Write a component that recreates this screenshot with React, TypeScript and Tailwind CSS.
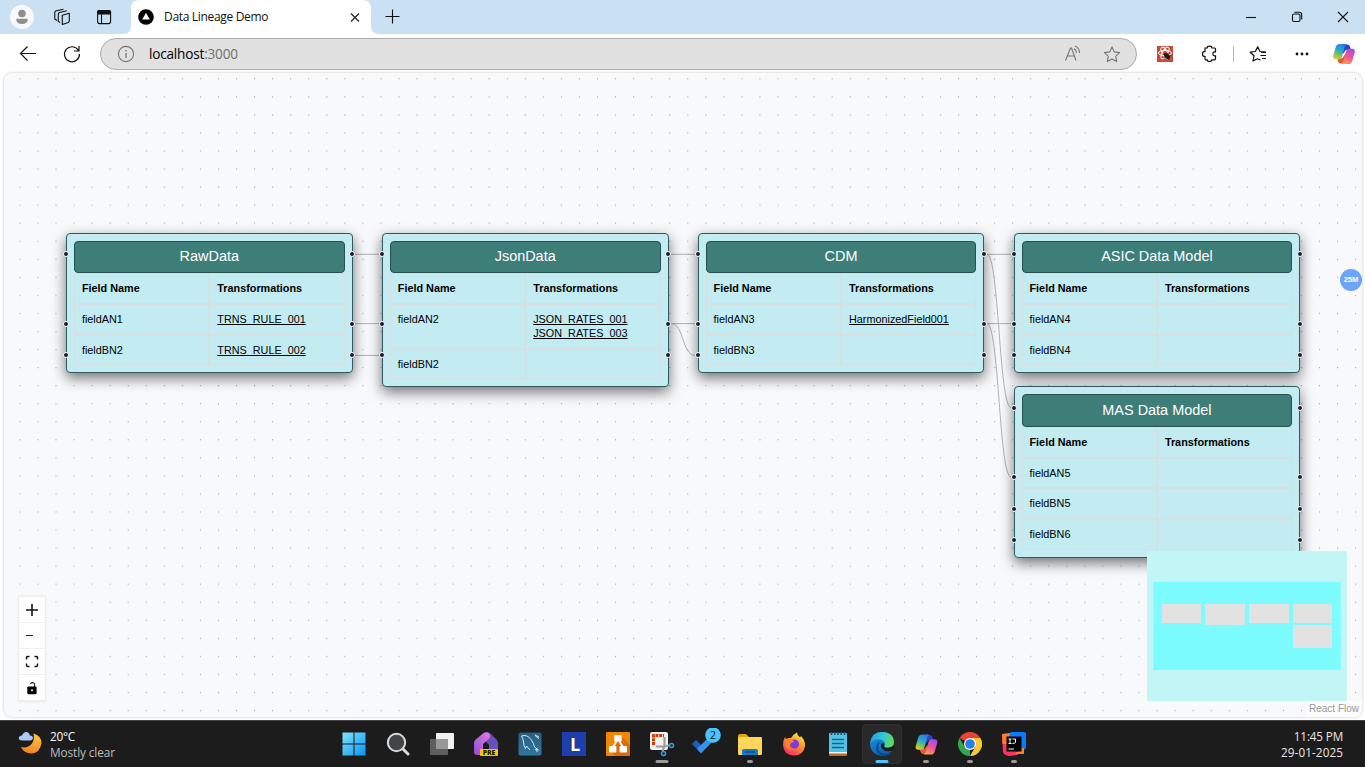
import React from "react";

const UI = "font-['Open_Sans','Noto_Sans',sans-serif]";

type Row = { field: string; rules: string[] };
type NodeData = { title: string; x: number; y: number; rows: Row[] };

const NODES: NodeData[] = [
  { title: "RawData", x: 65.9, y: 232.7, rows: [{ field: "fieldAN1", rules: ["TRNS_RULE_001"] }, { field: "fieldBN2", rules: ["TRNS_RULE_002"] }] },
  { title: "JsonData", x: 381.8, y: 232.7, rows: [{ field: "fieldAN2", rules: ["JSON_RATES_001", "JSON_RATES_003"] }, { field: "fieldBN2", rules: [] }] },
  { title: "CDM", x: 697.6, y: 232.7, rows: [{ field: "fieldAN3", rules: ["HarmonizedField001"] }, { field: "fieldBN3", rules: [] }] },
  { title: "ASIC Data Model", x: 1013.5, y: 232.7, rows: [{ field: "fieldAN4", rules: [] }, { field: "fieldBN4", rules: [] }] },
  { title: "MAS Data Model", x: 1013.5, y: 386.3, rows: [{ field: "fieldAN5", rules: [] }, { field: "fieldBN5", rules: [] }, { field: "fieldBN6", rules: [] }] },
];

const EDGES = [
  "M355 254.3H379",
  "M355 323.6H379",
  "M355 355.4H379",
  "M671 254.3H695",
  "M671 323.6H695",
  "M671 323.6C684 323.6 682 355.4 695 355.4",
  "M987 254.3H1011",
  "M987 323.6H1011",
  "M987 254.3C999 254.3 999 407.6 1011 407.6",
  "M987 323.6C999 323.6 999 477 1011 477",
];

const CANVAS_X = 4;
const CANVAS_Y = 73;

function Handle({ side, y }: { side: "left" | "right"; y: number }) {
  return (
    <span
      className={
        "absolute size-[6px] rounded-full border border-white bg-[#1a192b] " +
        (side === "left" ? "-left-[4px]" : "-right-[3.5px]")
      }
      style={{ top: y }}
    />
  );
}

function Cell({ children, bold }: { children?: React.ReactNode; bold?: boolean }) {
  return (
    <div
      className={
        "border border-[#d8dfe1] px-[7px] pt-[7px] pb-[7.65px] text-[10.83px] leading-[14.1px] text-black " +
        (bold ? "font-bold" : "")
      }
    >
      {children}
    </div>
  );
}

function TableNode({ node }: { node: NodeData }) {
  const handles = [17.6, ...node.rows.map((_, i) => 87 + i * 31.6)];
  return (
    <div
      className="absolute w-[286.8px] rounded-[4px] border border-[#2f5a60] bg-[#c2ecf2] p-[7px] shadow-[0_5px_14px_rgba(0,0,0,0.55)]"
      style={{ left: node.x - CANVAS_X, top: node.y - CANVAS_Y }}
    >
      <div className="flex h-[32.5px] items-center justify-center rounded-[4px] border border-[#27504f] bg-[#3e7e78] text-[14.44px] text-white">
        {node.title}
      </div>
      <div className="grid grid-cols-2">
        <Cell bold>Field Name</Cell>
        <Cell bold>Transformations</Cell>
        {node.rows.map((row) => (
          <React.Fragment key={row.field}>
            <Cell>{row.field}</Cell>
            <Cell>
              {row.rules.map((rule) => (
                <div key={rule} className="underline">{rule}</div>
              ))}
            </Cell>
          </React.Fragment>
        ))}
      </div>
      {handles.map((y) => (
        <React.Fragment key={y}>
          <Handle side="left" y={y} />
          <Handle side="right" y={y} />
        </React.Fragment>
      ))}
    </div>
  );
}

function Canvas() {
  return (
    <main className="relative h-[644px] w-[1358px] overflow-hidden rounded-[8px] bg-[#f8f9fb] font-['Liberation_Sans',Arial,sans-serif] shadow-[0_0_2px_1px_rgba(0,0,0,0.12)]">
      <svg className="absolute inset-0" width="1359" height="644">
        <defs>
          <pattern id="dots" x="15.4" y="5.2" width="18.05" height="18.05" patternUnits="userSpaceOnUse">
            <circle cx="0.6" cy="0.6" r="0.55" fill="#91919a" />
          </pattern>
        </defs>
        <rect width="1359" height="644" fill="url(#dots)" />
        <g transform="translate(-4 -73)" fill="none" stroke="#b1b1b7" strokeWidth="1">
          {EDGES.map((d) => (
            <path key={d} d={d} />
          ))}
        </g>
      </svg>
      {NODES.map((n) => (
        <TableNode key={n.title} node={n} />
      ))}

      <div className="absolute top-[524px] left-[15px] flex flex-col shadow-[0_0_2px_1px_rgba(0,0,0,0.08)]">
        {["plus", "minus", "fit", "lock"].map((k) => (
          <button key={k} className="flex h-[26px] w-[26px] items-center justify-center border-b border-[#eee] bg-white">
            <svg width="14" height="14" viewBox="0 0 14 14">
              {k === "plus" && <path d="M1 7H13M7 1V13" stroke="#111" strokeWidth="1.6" />}
              {k === "minus" && <path d="M1 6.5H8" stroke="#222" strokeWidth="1.1" />}
              {k === "fit" && (
                <path d="M1.5 4.5V2.8Q1.5 1.5 2.8 1.5H4.5M9.5 1.5H11.2Q12.5 1.5 12.5 2.8V4.5M12.5 8.5V10.2Q12.5 11.5 11.2 11.5H9.5M4.5 11.5H2.8Q1.5 11.5 1.5 10.2V8.5" fill="none" stroke="#111" strokeWidth="1.5" />
              )}
              {k === "lock" && (
                <>
                  <path d="M5.2 2.6Q8.8 0.4 9.6 3.3V6" fill="none" stroke="#111" strokeWidth="1.1" />
                  <rect x="2.3" y="5.4" width="9.3" height="7.8" rx="1.2" fill="#000" />
                  <circle cx="7" cy="9.2" r="1" fill="#fff" />
                </>
              )}
            </svg>
          </button>
        ))}
      </div>

      <svg className="absolute top-[478px] left-[1143px]" width="200" height="150">
        <rect width="200" height="150" fill="#c2f5f5" />
        <rect x="6.3" y="31" width="187.4" height="88" fill="#7dfcff" />
        <g fill="#e2e2e2" shapeRendering="crispEdges">
          <rect x="15" y="53" width="39" height="19" />
          <rect x="58" y="53" width="40" height="21" />
          <rect x="102" y="53" width="40" height="19" />
          <rect x="146" y="53" width="39" height="19" />
          <rect x="146" y="74" width="39" height="23" />
        </g>
      </svg>
      <div className="absolute right-0 bottom-0 bg-white/50 pr-[3px] pl-[3px] text-[10px] leading-[16px] text-[#999]">React Flow</div>
      <div className="absolute top-[196px] left-[1336px] flex size-[22px] items-center justify-center rounded-full bg-[#6ea4f7] text-[7.5px] font-bold text-white">25M</div>
    </main>
  );
}

function CopilotLogo({ size, id }: { size: number; id: string }) {
  return (
    <svg width={size} height={size} viewBox="0 0 24 24">
      <defs>
        <linearGradient id={id + "a"} x1="0.6" y1="0" x2="0.2" y2="1">
          <stop offset="0" stopColor="#2a7de8" />
          <stop offset="0.4" stopColor="#28a8c8" />
          <stop offset="0.7" stopColor="#7cc45a" />
          <stop offset="1" stopColor="#f0c62c" />
        </linearGradient>
        <linearGradient id={id + "b"} x1="0.7" y1="0" x2="0.3" y2="1">
          <stop offset="0" stopColor="#a44be8" />
          <stop offset="0.5" stopColor="#ec5596" />
          <stop offset="1" stopColor="#f9a04a" />
        </linearGradient>
      </defs>
      <path d="M11 2H15.500Q17.500 2 18.200 4.200L19.200 7.500H15.500Q13.500 7.500 13 9L11 12Z" fill="#2446c8" />
      <path d="M13 22H8.500Q6.500 22 5.800 19.800L4.800 16.500H8.500Q10.500 16.500 11 15L13 12Z" fill="#e8553a" />
      <path d="M7.500 1.500H15Q13.300 2.200 12.600 5L10 14.500Q9.200 17.500 6.800 17.500H3.500Q0 17.500 0.800 13.500L3.500 4.500Q4.500 1.500 7.500 1.500Z" fill={`url(#${id}a)`} />
      <path d="M16.500 22.500H9Q10.700 21.800 11.400 19L14 9.500Q14.800 6.500 17.200 6.500H20.500Q24 6.500 23.200 10.500L20.500 19.500Q19.500 22.500 16.500 22.500Z" fill={`url(#${id}b)`} />
    </svg>
  );
}

function TabStrip() {
  return (
    <div className="flex h-[34px] items-center bg-[#c9e1f3]">
      <svg width="131" height="34" viewBox="0 0 131 34">
        <circle cx="22" cy="17" r="12" fill="#f8f8f8" />
        <circle cx="22" cy="13.500" r="3.800" fill="#8e8e8e" />
        <path d="M16.300 18.800H27.700V20Q27 24 22 24T16.300 20Z" fill="#8e8e8e" />
        <g fill="none" stroke="#111" strokeWidth="1.100" strokeLinejoin="round">
          <path d="M62.300 15.300L69.300 13.200V21L68.300 22.500L62.300 24.500Z" />
          <path d="M60 22.500L58.300 21.500V14Q58.300 12.900 59.500 12.500L66.800 10.700M57 20.500L54.800 19V12.500Q54.800 11 56.300 10.700L63.500 9.300" />
          <rect x="97.600" y="10.600" width="13" height="13" rx="2" />
          <path d="M101.500 14V23.500" />
        </g>
        <path d="M97 12Q97 10 99 10H109Q111 10 111 12V14.500H97Z" fill="#111" />
        <path d="M131 26V34H123Q131 34 131 26Z" fill="#fff" />
      </svg>
      <div className="flex h-[34px] w-[240px] items-center rounded-t-[8px] bg-white pl-[7px]">
        <svg width="16" height="16" viewBox="0 0 16 16">
          <circle cx="8" cy="8" r="7.800" fill="#000" />
          <path d="M8 3.700L11.800 10.500H4.200Z" fill="#fff" />
        </svg>
        <span className="ml-[10px] w-[184px] text-[12px] tracking-[-0.32px] text-[#111]">Data Lineage Demo</span>
        <svg width="14" height="14" viewBox="0 0 14 14"><path d="M3 3.500L11 11.500M11 3.500L3 11.500" stroke="#222" strokeWidth="1.200" /></svg>
      </div>
      <svg width="40" height="34" viewBox="0 0 40 34">
        <path d="M0 26V34H8Q0 34 0 26Z" fill="#fff" />
        <path d="M14.500 16.500H28.500M21.500 9.500V23.500" stroke="#111" strokeWidth="1.100" />
      </svg>
      <svg className="ml-auto" width="125" height="34" viewBox="0 0 125 34" fill="none" stroke="#111" strokeWidth="1.100">
        <path d="M6 17.500H16" />
        <rect x="52.500" y="14" width="7.500" height="7.500" rx="1.500" />
        <path d="M54.500 12.300H59.500Q61.700 12.300 61.700 14.500V19.500" />
        <path d="M98 12L108 22M108 12L98 22" />
      </svg>
    </div>
  );
}

const STAR = "M0 -7.500L2.300 -2.600L7.600 -1.900L3.700 1.800L4.700 7.100L0 4.600L-4.700 7.100L-3.700 1.800L-7.600 -1.900L-2.300 -2.600Z";

function Toolbar() {
  return (
    <div className="flex h-[39px] items-center bg-white">
      <svg width="100" height="39" viewBox="0 0 100 39" fill="none" stroke="#111" strokeWidth="1.200">
        <path d="M36 19.500H21M27.500 12.500L20.500 19.500L27.500 26.500" />
        <path d="M78.500 16.500A7.500 7.500 0 1 0 79.500 20M79 12V17H74" />
      </svg>
      <div className="flex h-[32px] w-[1037px] items-center rounded-full border border-[#ababab] bg-[#e1e1e1] pl-[16px]">
        <svg width="18" height="18" viewBox="0 0 18 18" fill="none" stroke="#747474">
          <circle cx="9" cy="9" r="7.600" strokeWidth="1.100" />
          <path d="M9 8V13M9 5V6.500" strokeWidth="1.300" />
        </svg>
        <span className="ml-[14px] pt-[2px] text-[13.600px] tracking-[-0.2px] text-black">localhost<span className="text-[#707070]">:3000</span></span>
        <svg className="mr-[11px] ml-auto" width="62" height="30" viewBox="0 0 62 30" fill="none" stroke="#747474" strokeWidth="1.100">
          <path d="M2.500 21.500L7.500 9H8.500L13 21.500M4.300 17H11.500M11 9.500Q13.500 11 13.500 14M12 7Q16.500 9 16.500 14" />
          <path transform="translate(49 15.500)" strokeLinejoin="round" d={STAR} />
        </svg>
      </div>
      <svg width="228" height="39" viewBox="0 0 228 39" fill="none">
        <rect x="20" y="12" width="16" height="16" fill="#c74b36" />
        <g stroke="#fff" strokeWidth="1">
          <ellipse cx="28" cy="19" rx="6.500" ry="2.600" />
          <ellipse cx="28" cy="19" rx="6.500" ry="2.600" transform="rotate(60 28 19)" />
          <ellipse cx="28" cy="19" rx="6.500" ry="2.600" transform="rotate(-60 28 19)" />
        </g>
        <ellipse cx="30" cy="22" rx="2.500" ry="3.500" transform="rotate(-40 30 22)" fill="#2b1713" />
        <path d="M25.500 20L33 24M27 24.500L32 18.500M31 26L33.500 21" stroke="#2b1713" strokeWidth="0.800" />
        <path d="M68 14H70.200Q70.200 12.200 72.500 12.200T74.800 14H77.500Q78.500 14 78.500 15V17.800H77.500Q75.800 17.900 75.800 19.800T77.500 21.800H78.500V24.800Q78.500 25.800 77.500 25.800H74.800Q74.800 27.500 72.500 27.500T70.200 25.800H69Q68 25.800 68 24.800V22.500Q65.500 22.500 65.500 19.900T68 17.300Z" stroke="#111" strokeWidth="1.200" />
        <path d="M96.500 12V28" stroke="#b8b8b8" />
        <path d="M123.500 26L120.300 24.800L116 27L117 21.800L113.200 18.200L118.400 17.500L120.700 12.700L123 17.500L129 18M124 18.500H129M123.500 21.500H129M125 24.500H129" stroke="#111" strokeWidth="1.200" strokeLinejoin="round" />
        <g fill="#111"><circle cx="160" cy="20" r="1.400" /><circle cx="165" cy="20" r="1.400" /><circle cx="170" cy="20" r="1.400" /></g>
        <svg x="195.500" y="8.500" width="23" height="23"><CopilotLogo size={23} id="top" /></svg>
      </svg>
    </div>
  );
}

function EdgeLogo() {
  return (
    <svg width="26" height="26" viewBox="0 0 24 24">
      <defs>
        <linearGradient id="eg" x1="0" y1="0.3" x2="1" y2="0.5"><stop offset="0" stopColor="#22a0e0" /><stop offset="0.5" stopColor="#31c6d8" /><stop offset="1" stopColor="#66dc56" /></linearGradient>
        <linearGradient id="eb" x1="0" y1="0" x2="0.5" y2="1"><stop offset="0" stopColor="#1e9ae6" /><stop offset="1" stopColor="#0f5cae" /></linearGradient>
      </defs>
      <circle cx="12" cy="12" r="11" fill="url(#eb)" />
      <path d="M8.500 14Q8.500 21 16 21Q19 21 21 19.300Q18 23 12 23Q6 21 6.500 15Q7 11 10 10Q8.500 12 8.500 14Z" fill="#0c4a93" />
      <path d="M1.200 11Q2.500 1 12 1Q23 1.500 23 10.500Q22.500 15.500 17.500 15.500Q13.500 15.500 14 13.500Q15.500 12.500 14.500 10.500Q12.500 7.500 8.500 7.500Q3.500 7.500 1.200 11Z" fill="url(#eg)" />
      <path d="M14 13.500Q13.500 15.500 17.500 15.500Q20.500 15.500 23.400 13V17Q20.500 19 16.500 18.600Q11.500 17.500 11 13.500Q11 11.500 12.800 11Q15 12 14 13.500Z" fill="#1c1c1c" />
    </svg>
  );
}

function TaskIcon({ name }: { name: string }) {
  switch (name) {
    case "windows":
      return (
        <svg width="24" height="24" viewBox="0 0 24 24">
          <defs><linearGradient id="win" x1="0" y1="0" x2="1" y2="1"><stop offset="0" stopColor="#7ee4fc" /><stop offset="1" stopColor="#0b93f2" /></linearGradient></defs>
          <path d="M0.500 0.500H11.500V11.500H0.500ZM12.500 0.500H23.500V11.500H12.500ZM0.500 12.500H11.500V23.500H0.500ZM12.500 12.500H23.500V23.500H12.500Z" fill="url(#win)" />
        </svg>
      );
    case "search":
      return (
        <svg width="24" height="24" viewBox="0 0 24 24" stroke="#d9dadd">
          <path d="M16.500 16.500L22 22" strokeWidth="3" strokeLinecap="round" />
          <circle cx="10.500" cy="10.500" r="8.700" fill="#424446" strokeWidth="2" />
        </svg>
      );
    case "tasks":
      return (
        <svg width="24" height="24" viewBox="0 0 24 24">
          <rect x="6" y="1" width="18" height="16" rx="1" fill="#f1f1f1" />
          <rect x="0" y="7" width="18" height="16" rx="1" fill="#5e5e5e" />
          <path d="M6 7H18V17H6Z" fill="#989898" />
        </svg>
      );
    case "home":
      return (
        <svg width="24" height="24" viewBox="0 0 24 24">
          <defs><linearGradient id="dh" x1="0" y1="1" x2="1" y2="0"><stop offset="0" stopColor="#8b50d4" /><stop offset="1" stopColor="#e57ae4" /></linearGradient></defs>
          <path d="M12 0.500Q14.500 -0.500 17 2L22.500 7.500Q24 9 24 11V20Q24 23 21 23H15V13L10 8Z" fill="#6850b9" />
          <path d="M9 1.500Q12 -1 15 1.500Q17.500 4 15 6.500L9 12V23H3Q0 23 0 20V11Q0 9 1.500 7.800Z" fill="url(#dh)" />
          <path d="M9 13L12 10.500L15 13V17H9Z" fill="#1c1c1c" />
          <rect x="6" y="17" width="18" height="7" rx="1" fill="#ffc400" />
          <text x="15" y="23" textAnchor="middle" fontSize="6.800" fontWeight="800" fontFamily="Open Sans" fill="#221b00">PRE</text>
        </svg>
      );
    case "mysql":
      return (
        <svg width="24" height="24" viewBox="0 0 24 24">
          <defs><linearGradient id="my" x1="0" y1="0" x2="0" y2="1"><stop offset="0" stopColor="#275f80" /><stop offset="1" stopColor="#2e789e" /></linearGradient></defs>
          <rect x="0.500" y="0.500" width="23" height="23" rx="2" fill="url(#my)" />
          <path d="M3.500 4Q9 2 13 7.500Q16 11.500 16.500 15L20.500 18L17.500 17.500L19.500 20M3.500 4Q5 6 5.500 10Q5.500 14 7.500 16.500L8.500 14L12 18M17 2.500L18.500 5L21 6.500M18.500 3.500L21 5" fill="none" stroke="#d9ebf3" strokeWidth="1" />
        </svg>
      );
    case "l":
      return (
        <div className="flex size-[24px] items-center justify-center bg-[#1d3fae] pl-[2px] font-['Open_Sans',sans-serif] text-[18px] leading-none font-bold text-white [text-shadow:-1px_0_0_#083a4a]">L</div>
      );
    case "drawio":
      return (
        <svg width="24" height="24" viewBox="0 0 24 24">
          <rect width="24" height="24" rx="1" fill="#f08705" />
          <path d="M15 4L24 13V24H9L4 19Z" fill="#df6c0c" />
          <path d="M12 7L6.500 16M12 7L17.500 16" stroke="#fff" strokeWidth="1.800" />
          <rect x="8.300" y="3" width="7.400" height="6.500" rx="1" fill="#fff" />
          <rect x="3" y="14" width="7.400" height="6.500" rx="1" fill="#fff" />
          <rect x="13.600" y="14" width="7.400" height="6.500" rx="1" fill="#fff" />
        </svg>
      );
    case "snip":
      return (
        <svg width="26" height="26" viewBox="0 0 26 26">
          <rect x="1" y="1" width="18" height="18" rx="2" fill="#f2f2f2" />
          <path d="M4.500 14V4.500H15" fill="none" stroke="#d83b01" strokeWidth="3" strokeDasharray="3 0.800" />
          <path d="M15.500 6V15L13.500 20M7 15.500H16L21 14" fill="none" stroke="#9b9da0" strokeWidth="2.200" />
          <circle cx="22.500" cy="14.500" r="2" fill="#1c1c1c" stroke="#2fa3e7" strokeWidth="1.500" />
          <circle cx="14.500" cy="22.500" r="2" fill="#1c1c1c" stroke="#2fa3e7" strokeWidth="1.500" />
        </svg>
      );
    case "todo":
      return (
        <svg width="32" height="32" viewBox="0 0 32 32">
          <path d="M2 16L6 12L14.500 20L10.500 24.500Z" fill="#1c5fc1" />
          <path d="M7 21L20 8L24 12L11 25.500Z" fill="#3b8fe8" />
          <circle cx="23" cy="7" r="7.800" fill="#4cc2ff" />
          <text x="23" y="10.800" textAnchor="middle" fontSize="10.500" fontFamily="Open Sans" fill="#08202d">2</text>
        </svg>
      );
    case "folder":
      return (
        <svg width="26" height="26" viewBox="0 0 26 26">
          <path d="M1 5Q1 3 3 3H9L12 6H24Q25 6 25 7V12H1Z" fill="#e0a30a" />
          <rect x="1" y="6" width="24" height="18" rx="1.500" fill="#ffd659" />
          <path d="M5 24V20Q5 18 7 18H19Q21 18 21 20V24Z" fill="#1679c8" />
          <path d="M8 21H18" stroke="#0d4a82" strokeWidth="1.400" />
        </svg>
      );
    case "firefox":
      return (
        <svg width="24" height="24" viewBox="0 0 24 24">
          <defs><linearGradient id="ff" x1="0.8" y1="0" x2="0.2" y2="1"><stop offset="0" stopColor="#fff044" /><stop offset="0.4" stopColor="#ff9a2b" /><stop offset="1" stopColor="#f5246a" /></linearGradient></defs>
          <path d="M3 5L4 7Q6 5.500 9 6Q11.500 2 15 0.500Q15 3.500 18 5.500L19 4Q23.500 9 23 14Q21.500 23.500 12 23.500Q1.500 23 1 13Q1 8.500 3 5Z" fill="url(#ff)" />
          <circle cx="12.500" cy="12" r="4.600" fill="#7a3ddd" />
          <path d="M3.500 8Q8 6 12.500 9.500Q9 10 8 12.500Q7 16 11.500 18Q4.500 18.500 3 13Z" fill="#ff8226" />
        </svg>
      );
    case "notepad":
      return (
        <svg width="24" height="26" viewBox="0 0 24 26">
          <rect x="3" y="20" width="18" height="5" rx="1" fill="#b96b2c" />
          <path d="M3 20H21V22.500H3Z" fill="#f5f5f5" />
          <rect x="3" y="2" width="18" height="19" rx="1" fill="#51c1e6" />
          <path d="M6 8.500H18M6 12.500H18M6 16.500H18" stroke="#12668d" strokeWidth="1.600" />
          <path d="M5.500 1V4M8.800 1V4M12 1V4M15.200 1V4M18.500 1V4" stroke="#0f587a" strokeWidth="1.500" />
        </svg>
      );
    case "edge":
      return <EdgeLogo />;
    case "copilot":
      return <CopilotLogo size={23} id="task" />;
    case "chrome":
      return (
        <svg width="24" height="24" viewBox="0 0 24 24">
          <path d="M12 12L1.600 6A12 12 0 0 1 22.400 6Z" fill="#ea4335" />
          <path d="M12 12V24A12 12 0 0 1 1.600 6L6.800 15Z" fill="#30a650" />
          <path d="M12 6H22.400A12 12 0 0 1 12 24L17.200 15Z" fill="#fcc934" />
          <circle cx="12" cy="12" r="6" fill="#fff" />
          <circle cx="12" cy="12" r="4.800" fill="#2b7de9" />
        </svg>
      );
    default:
      return (
        <svg width="24" height="24" viewBox="0 0 24 24">
          <path d="M0 2L8 1L16 23L7 24Q2 23 1 20Z" fill="#fe3364" />
          <path d="M0 2L11 1L6 12H0.500Z" fill="#ff7b2e" />
          <path d="M9 0H22Q24 0 24 2V16L18 22L7 5Z" fill="#087cfa" />
          <path d="M19 16H22V22H13Z" fill="#fc801d" />
          <rect x="4.500" y="4.500" width="15" height="15" fill="#000" />
          <path d="M6.500 7H9.500M8 7V11.500M6.500 11.500H9.500M10.500 7H13.500V10Q13.500 11.500 10.500 11.500M6.500 17H12" stroke="#fff" strokeWidth="1" fill="none" />
        </svg>
      );
  }
}

const TASKS = ["windows", "search", "tasks", "home", "mysql", "l", "drawio", "snip", "todo", "folder", "firefox", "notepad", "edge", "copilot", "chrome", "idea"];

function Taskbar() {
  return (
    <footer className="flex h-[47px] items-center border-t border-[#444] bg-[#1c1c1c]">
      <div className="flex w-[332px] items-center pl-[17px]">
        <svg width="26" height="26" viewBox="0 0 26 26">
          <defs><linearGradient id="moon" x1="0.7" y1="0" x2="0.4" y2="1"><stop offset="0" stopColor="#ffc83d" /><stop offset="1" stopColor="#f18324" /></linearGradient></defs>
          <path d="M16.500 2.500Q24.500 5 24.500 12Q23 22 14.500 22.500Q6.500 22 4 16Q10.500 17.500 14.500 13Q18 8.500 16.500 2.500Z" fill="url(#moon)" />
          <path d="M5 9.500Q1.500 9.500 1.800 6.500Q2.500 4.500 5 4.500Q6.500 0.500 10 1Q12.500 1.500 13 4.500Q16 4.500 16 7Q15.500 9.500 13 9.500Z" fill="#a9c8f5" />
        </svg>
        <div className="ml-[7px] text-[11.800px] leading-[16px] text-white">
          <div className="tracking-[-0.3px]">20°C</div>
          <div className="tracking-[-0.1px] text-[#bdbdbd]">Mostly clear</div>
        </div>
      </div>
      <div className="flex">
        {TASKS.map((t, i) => (
          <div key={t} className="flex w-[44px] justify-center">
            <div className={"relative flex h-[40px] w-[40px] items-center justify-center rounded-[4px] " + (t === "edge" ? "border border-[#303030] bg-[#292929]" : "")}>
              <TaskIcon name={t} />
              {(t === "snip" || t === "edge") && (
                <span className={"absolute left-1/2 h-[3px] w-[13px] -translate-x-1/2 rounded-full " + (t === "edge" ? "bottom-0 bg-[#4cc2ff]" : "bottom-px bg-[#9a9a9a]")} />
              )}
              {(t === "folder" || i > 12) && (
                <span className="absolute bottom-px left-1/2 h-[3px] w-[6px] -translate-x-1/2 rounded-full bg-[#9a9a9a]" />
              )}
            </div>
          </div>
        ))}
      </div>
      <div className="ml-auto pr-[22px] text-right text-[11.700px] leading-[16px] text-[#e8e8e8]">
        <div className="tracking-[-0.15px]">11:45 PM</div>
        <div className="tracking-[0.1px]">29-01-2025</div>
      </div>
    </footer>
  );
}

export default function App() {
  return (
    <div className={"flex h-[767px] w-[1365px] flex-col overflow-hidden bg-white " + UI}>
      <TabStrip />
      <Toolbar />
      <div className="flex h-[647px] pl-[4px]"><Canvas /></div>
      <Taskbar />
    </div>
  );
}
